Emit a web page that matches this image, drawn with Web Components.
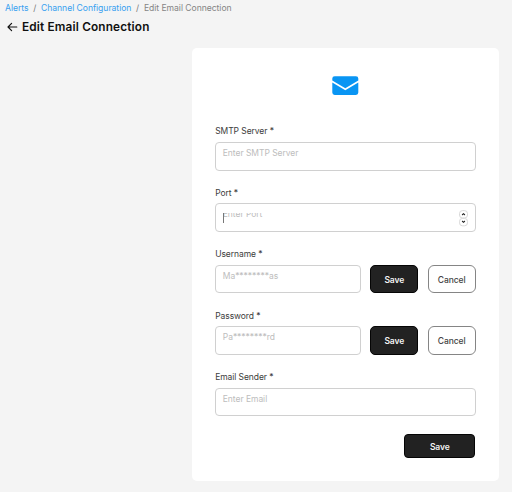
<!DOCTYPE html>
<html lang="en">
<head>
<meta charset="utf-8">
<title>Edit Email Connection</title>
<style>
html,body{margin:0;height:100%;background:#f4f4f4;overflow:hidden}
body{font-family:Inter,"Liberation Sans",sans-serif}
</style>
</head>
<body>
<email-page></email-page>
<script>
const define = (name, html) => customElements.define(name, class extends HTMLElement {
  constructor() {
    super();
    const t = document.createElement('template');
    t.innerHTML = html;
    this.attachShadow({mode: 'open'}).appendChild(t.content.cloneNode(true));
  }
});

define('crumb-trail', `<style>
:host{display:flex;height:15px;align-items:center;padding-left:5px;font-size:8.6px;color:#858585;white-space:pre;letter-spacing:-.04px}
::slotted(a){color:#38a0f0}
::slotted(i){font-style:normal;width:12.6px;text-align:center;color:#777}
</style><slot></slot>`);

define('page-title', `<style>
:host{display:flex;height:23px;align-items:center;padding-left:7px;gap:4px;font-size:11.8px;font-weight:600;color:#101010;white-space:nowrap;letter-spacing:.16px}
svg{display:block}
</style><svg width="11" height="10" viewBox="0 0 11 10" fill="none" stroke="#111" stroke-width="1.15" stroke-linecap="round" stroke-linejoin="round"><path d="M9.8 5H1M4.6 1.4L1 5l3.6 3.6"/></svg><span><slot></slot></span>`);

define('mail-icon', `<style>
:host{display:flex;justify-content:center;height:19px}
svg{display:block}
</style><svg width="27" height="19" viewBox="0 0 27 19"><path transform="translate(.3 .2)" fill="#0995f3" d="M2.4 0H23.6Q26 0 26 2.4V4.4L13 12 0 4.4V2.4Q0 0 2.4 0ZM0 6.4L13 14.1 26 6.4V16.4Q26 18.8 23.6 18.8H2.4Q0 18.8 0 16.4Z"/></svg>`);

define('form-field', `<style>
:host{display:block;height:61.4px}
label{display:block;height:16.6px;line-height:12px;font-size:8.5px;color:#3c3c3c;letter-spacing:-.07px;white-space:nowrap}
.row{display:flex;gap:9.4px}
</style><label><slot name="label"></slot></label><div class="row"><slot></slot></div>`);

define('text-box', `<style>
:host{display:flex;flex:1;box-sizing:border-box;height:28.6px;border:1px solid #d0d0d0;border-radius:4px;padding:0 7px 0 6.6px;background:#fff;font-size:8.5px;letter-spacing:-.04px;color:#bdbdbd;white-space:nowrap}
.t{flex:1;height:20px;line-height:20px}
:host([focused]) .t{height:10px;line-height:10px;margin-top:8.6px;overflow:hidden;border-left:1px solid #777}
:host([focused]) .t span{display:block;margin:-3.6px 0 0 -1px}
</style><div class="t"><span><slot></slot></span></div><slot name="end"></slot>`);

define('number-stepper', `<style>
:host{display:block;width:9px;height:17px;margin-top:5.5px}
svg{display:block}
</style><svg width="9" height="17" viewBox="0 0 9 17" fill="#fff" stroke="#cfcfcf" stroke-width=".8"><rect x=".5" y=".6" width="8" height="7.4" rx="3"/><rect x=".5" y="8.4" width="8" height="7.4" rx="3"/><path d="M3.1 5L4.5 3.7 5.9 5M3.1 11L4.5 12.3 5.9 11" fill="none" stroke="#222" stroke-width="1.1"/></svg>`);

define('push-button', `<style>
:host{display:flex;align-items:center;justify-content:center;box-sizing:border-box;width:48px;height:28.6px;padding:1px 0 0;border:1px solid #050505;border-radius:5px;background:#222;color:#f4f4f4;font-size:8.5px;font-weight:600;letter-spacing:-.08px;white-space:nowrap}
:host([outline]){background:#fff;color:#444;border-color:#858585;border-radius:6px;font-weight:500}
:host([submit]){width:71px;height:24px;border-radius:4px;margin-right:.4px}
</style><slot></slot>`);

define('form-card', `<style>
:host{display:block;box-sizing:border-box;width:307px;height:433px;margin:10px 0 0 192px;padding:28px 23.3px 0 23.2px;border-radius:5px;background:#fff}
.fields{padding-top:30.4px}
.actions{display:flex;justify-content:flex-end;padding-top:1.8px}
</style><slot name="icon"></slot><div class="fields"><slot></slot></div><div class="actions"><slot name="actions"></slot></div>`);

define('email-page', `<style>:host{display:block;height:492px}</style>
<crumb-trail><a>Alerts</a><i>/</i><a>Channel Configuration</a><i>/</i><span>Edit Email Connection</span></crumb-trail>
<page-title>Edit Email Connection</page-title>
<form-card>
<mail-icon slot="icon"></mail-icon>
<form-field><span slot="label">SMTP Server *</span><text-box>Enter SMTP Server</text-box></form-field>
<form-field><span slot="label">Port *</span><text-box focused>Enter Port<number-stepper slot="end"></number-stepper></text-box></form-field>
<form-field><span slot="label">Username *</span><text-box>Ma********as</text-box><push-button>Save</push-button><push-button outline>Cancel</push-button></form-field>
<form-field><span slot="label">Password *</span><text-box>Pa********rd</text-box><push-button>Save</push-button><push-button outline>Cancel</push-button></form-field>
<form-field><span slot="label">Email Sender *</span><text-box>Enter Email</text-box></form-field>
<push-button slot="actions" submit>Save</push-button>
</form-card>`);
</script>
</body>
</html>
